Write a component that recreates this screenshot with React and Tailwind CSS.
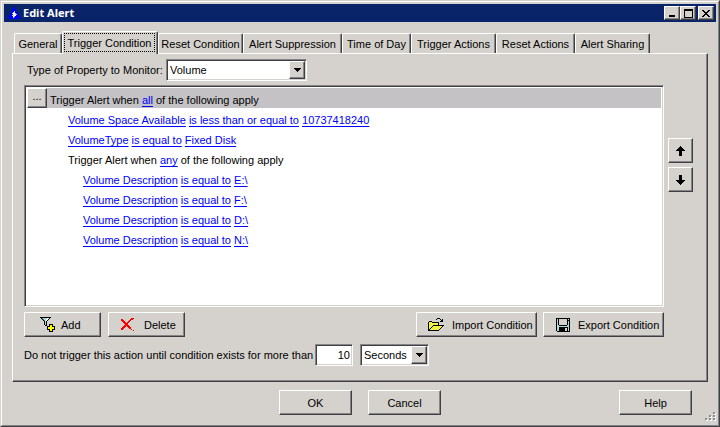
import React, { useState } from 'react';
import clsx from 'clsx';

const RAISED =
  'border border-t-white border-l-white border-r-[#404044] border-b-[#404044] shadow-[inset_-1px_-1px_0_#858487]';
const SUNKEN =
  'border border-t-[#858487] border-l-[#858487] border-r-white border-b-white bg-white shadow-[inset_1px_1px_0_#404044,inset_-1px_-1px_0_#d5d2cd]';

const TABS = [
  { label: 'General', width: 'w-12' },
  { label: 'Trigger Condition', width: 'w-[96px]' },
  { label: 'Reset Condition', width: 'w-[85px]' },
  { label: 'Alert Suppression', width: 'w-[99px]' },
  { label: 'Time of Day', width: 'w-[69px]' },
  { label: 'Trigger Actions', width: 'w-[85px]' },
  { label: 'Reset Actions', width: 'w-[79px]' },
  { label: 'Alert Sharing', width: 'w-[75px]' },
];

const DRIVES = ['E:\\', 'F:\\', 'D:\\', 'N:\\'];

const COLORS = {
  '#': '#000000',
  c: '#a9dada',
  t: '#3f8f8f',
  w: '#ffffff',
  y: '#ffff00',
  o: '#e6e67a',
  r: '#ff0000',
  b: '#0000ff',
  g: '#c8d4ff',
  d: '#8f8e8c',
  l: '#d5d2cd',
};

const ICONS = {
  app: [
    '.....bb.....',
    '.....bb.....',
    '....bbbb....',
    '....bbbb....',
    '...bbbgbb...',
    '...bbggbb...',
    '..bbgwwgbb..',
    '..bbbwwggb..',
    '.bbbggwwbbb.',
    '.bbbbwgbbbb.',
    'bbbbbgbbbbbb',
    'bbbbbbbbbbbb',
  ],
  add: [
    '###########....',
    '.#tccccww#.....',
    '..#tccww#......',
    '...#tcw#.......',
    '....#c#........',
    '....#c#........',
    '....#c#........',
    '....#c#..####..',
    '.....##..#yy#..',
    '.......###yy###',
    '.......#yyyyyy#',
    '.......#yyyyyy#',
    '.......###yy###',
    '.........#yy#..',
    '.........####..',
  ],
  remove: [
    '..........rrr',
    'rr.......rrr.',
    'rrr.....rr...',
    '.rrr...rr....',
    '..rrr.rr.....',
    '...rrrr......',
    '....rrr......',
    '...rrrrr.....',
    '..rrr.rrr....',
    '.rrr...rrr...',
    'rrr.....rr...',
    'rr........r..',
    '............r',
  ],
  open: [
    '.........###....',
    '........#...#.#.',
    '.............##.',
    '.###........###.',
    '#oyo#######.....',
    '#yoyoyoyoy#.....',
    '#oyoyoyoyo#.....',
    '#yoyo###########',
    '#oyo#yoyoyoyoy#.',
    '#yo#yoyoyoyoy#..',
    '#o#yoyoyoyoy#...',
    '##yoyoyoyoy#....',
    '###########.....',
  ],
  save: [
    '##############',
    '#c#llllllll#l#',
    '#c#llllllll###',
    '#c#llllllll#c#',
    '#c#llllllll#c#',
    '#c#llllllll#c#',
    '#c#llllllll#c#',
    '#cc########cc#',
    '#cccccccccccc#',
    '#cc#########c#',
    '#cc######ll#c#',
    '#cc######ll#c#',
    '#cc######ll#c#',
    '.#############',
  ],
  up: [
    '....#....',
    '...###...',
    '..#####..',
    '.#######.',
    '#########',
    '...###...',
    '...###...',
    '...###...',
    '...###...',
    '...###...',
  ],
  down: [
    '...###...',
    '...###...',
    '...###...',
    '...###...',
    '...###...',
    '#########',
    '.#######.',
    '..#####..',
    '...###...',
    '....#....',
  ],
  caret: ['#######', '.#####.', '..###..', '...#...'],
  minimize: ['......', '......', '......', '......', '......', '......', '######', '######'],
  maximize: [
    '#########',
    '#########',
    '#.......#',
    '#.......#',
    '#.......#',
    '#.......#',
    '#.......#',
    '#.......#',
    '#########',
  ],
  close: ['##....##', '.##..##.', '..####..', '...##...', '..####..', '.##..##.', '##....##'],
  grip: [
    '........dd.',
    '........ddw',
    '.........ww',
    '....dd..dd.',
    '....ddw.ddw',
    '.....ww..ww',
    'dd..dd..dd.',
    'ddw.ddw.ddw',
    '.ww..ww..ww',
  ],
};

const PixelIcon = ({ name, className }) => {
  const rows = ICONS[name];
  return (
    <svg
      width={rows[0].length}
      height={rows.length}
      shapeRendering="crispEdges"
      aria-hidden="true"
      className={clsx('shrink-0', className)}
    >
      {rows.map((row, y) =>
        [...row].map((cell, x) =>
          cell === '.' ? null : (
            <rect key={`${x}-${y}`} x={x} y={y} width="1" height="1" fill={COLORS[cell]} />
          )
        )
      )}
    </svg>
  );
};

const Button = ({ className, children, ...props }) => (
  <button type="button" className={clsx('flex items-center bg-[#d5d2cd]', RAISED, className)} {...props}>
    {children}
  </button>
);

const Select = ({ id, label, options, className }) => (
  <div className={clsx('relative h-[22px] p-px', SUNKEN, className)}>
    <select id={id} aria-label={label} className="block h-full w-full appearance-none bg-white pl-0.5 outline-none">
      {options.map((option) => (
        <option key={option}>{option}</option>
      ))}
    </select>
    <span
      className={clsx(
        'pointer-events-none absolute inset-y-px right-px flex w-4 items-center justify-center bg-[#d5d2cd]',
        RAISED
      )}
    >
      <PixelIcon name="caret" />
    </span>
  </div>
);

const Link = ({ children }) => (
  <a href="#" className="text-[#0000ff] underline underline-offset-2">
    {children}
  </a>
);

const TitleBar = () => (
  <header className="flex h-[18px] items-center bg-[#0a246a] pr-0.5 pl-1">
    <PixelIcon name="app" />
    <h1 className="ml-[3px] flex-1 font-['Noto_Sans',sans-serif] text-[11px] leading-4 font-bold text-white">
      Edit Alert
    </h1>
    <Button className="h-[14px] w-4 items-end justify-center pb-0.5" aria-label="Minimize">
      <PixelIcon name="minimize" />
    </Button>
    <Button className="h-[14px] w-4 justify-center" aria-label="Maximize">
      <PixelIcon name="maximize" />
    </Button>
    <Button className="ml-0.5 h-[14px] w-4 justify-center" aria-label="Close">
      <PixelIcon name="close" />
    </Button>
  </header>
);

const TabBar = ({ active, onSelect }) => (
  <div role="tablist" className="flex items-end pl-0.5">
    {TABS.map(({ label, width }) => {
      const selected = label === active;
      return (
        <button
          key={label}
          type="button"
          role="tab"
          aria-selected={selected}
          onClick={() => onSelect(label)}
          className={clsx(
            'rounded-t-[2px] border border-b-0 border-t-white border-r-[#404044] border-l-white bg-[#d5d2cd] whitespace-nowrap shadow-[inset_-1px_0_0_#858487]',
            width,
            selected ? 'relative -mb-px h-[23px] pt-px pr-0.5 pb-0.5 pl-px' : 'h-5'
          )}
        >
          <span className={clsx('flex h-full items-center justify-center', selected && 'border border-dotted border-black')}>
            {label}
          </span>
        </button>
      );
    })}
  </div>
);

const ConditionList = () => (
  <ul className={clsx('h-[222px] flex-1 p-0.5 leading-5', SUNKEN)}>
    <li className="flex h-5 bg-[#c4c2c5]">
      <Button className="w-5 justify-center pb-1" aria-label="Condition options">
        ...
      </Button>
      <span className="ml-[3px] pt-0.5">
        Trigger Alert when <Link>all</Link> of the following apply
      </span>
    </li>
    <li className="h-5 pt-0.5 pl-[41px]">
      <Link>Volume Space Available</Link> <Link>is less than or equal to</Link> <Link>10737418240</Link>
    </li>
    <li className="h-5 pt-0.5 pl-[41px]">
      <Link>VolumeType</Link> <Link>is equal to</Link> <Link>Fixed Disk</Link>
    </li>
    <li className="pl-[41px]">
      <p className="h-5 pt-0.5">
        Trigger Alert when <Link>any</Link> of the following apply
      </p>
      <ul className="pl-[15px]">
        {DRIVES.map((drive) => (
          <li key={drive} className="h-5 pt-0.5">
            <Link>Volume Description</Link> <Link>is equal to</Link> <Link>{drive}</Link>
          </li>
        ))}
      </ul>
    </li>
  </ul>
);

const App = () => {
  const [tab, setTab] = useState('Trigger Condition');
  const [delay, setDelay] = useState('10');

  return (
    <main className="border border-t-[#d5d2cd] border-r-[#404044] border-b-[#404044] border-l-[#d5d2cd] bg-[#d5d2cd] font-['Liberation_Sans',Arial,sans-serif] text-[11px] leading-4 text-black">
      <div className="border border-t-white border-r-[#858487] border-b-[#858487] border-l-white pt-0.5 pr-0.5 pl-0.5">
        <TitleBar />

        <div className="px-2 pt-[9px]">
          <TabBar active={tab} onSelect={setTab} />

          <section className={clsx('px-[11px] pt-[5px] pb-[15px]', RAISED)}>
            <div className="flex items-center pl-[3px]">
              <label htmlFor="property" className="w-[139px] whitespace-nowrap">
                Type of Property to Monitor:
              </label>
              <Select id="property" options={['Volume', 'Node', 'Interface']} className="w-[141px]" />
            </div>

            <div className="mt-1 flex items-center gap-1 pr-[3px]">
              <ConditionList />
              <div className="flex flex-col gap-1 pb-[62px]">
                <Button className="size-[25px] justify-center" aria-label="Move up">
                  <PixelIcon name="up" />
                </Button>
                <Button className="size-[25px] justify-center" aria-label="Move down">
                  <PixelIcon name="down" />
                </Button>
              </div>
            </div>

            <div className="mt-[5px] flex pr-8">
              <Button className="h-[25px] w-[77px] gap-1.5 pl-[15px]">
                <PixelIcon name="add" />
                Add
              </Button>
              <Button className="ml-[7px] h-[25px] w-[77px] gap-2.5 pl-3">
                <PixelIcon name="remove" />
                Delete
              </Button>
              <Button className="ml-auto h-[25px] w-[121px] gap-2 pl-[11px] whitespace-nowrap">
                <PixelIcon name="open" />
                Import Condition
              </Button>
              <Button className="ml-1.5 h-[25px] w-[121px] gap-2 pl-3 whitespace-nowrap">
                <PixelIcon name="save" />
                Export Condition
              </Button>
            </div>

            <div className="mt-[7px] flex items-center gap-[7px]">
              <div className="flex w-[329px] items-center gap-0.5">
                <label htmlFor="delay" className="whitespace-nowrap">
                  Do not trigger this action until condition exists for more than
                </label>
                <input
                  id="delay"
                  value={delay}
                  onChange={(e) => setDelay(e.target.value)}
                  className={clsx('h-[22px] min-w-0 flex-1 px-0.5 text-right outline-none', SUNKEN)}
                />
              </div>
              <Select id="unit" label="Delay unit" options={['Seconds', 'Minutes', 'Hours']} className="w-[69px]" />
            </div>
          </section>
        </div>

        <footer className="flex items-end pt-2 pb-1">
          <div className="flex flex-1 items-start pr-[13px] pb-1.5 pl-[275px]">
            <Button className="h-[25px] w-[73px] justify-center">OK</Button>
            <Button className="ml-4 h-[25px] w-[73px] justify-center">Cancel</Button>
            <Button className="ml-auto h-[25px] w-[73px] justify-center">Help</Button>
          </div>
          <PixelIcon name="grip" />
        </footer>
      </div>
    </main>
  );
};

export default App;
